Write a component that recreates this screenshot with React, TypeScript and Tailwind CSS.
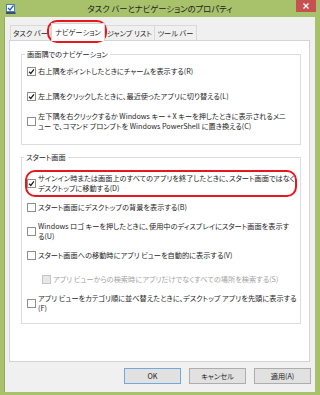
const font = "font-['Noto_Sans_CJK_JP','Noto_Sans',sans-serif] [font-feature-settings:'palt']";

function Box({ checked, disabled }: { checked?: boolean; disabled?: boolean }) {
  return (
    <span
      className={`flex h-[9px] w-[9px] shrink-0 items-center justify-center border ${
        disabled ? "border-[#c4c4c4] bg-[#e8e8e8]" : "border-[#8e8e8e] bg-white"
      }`}
    >
      {checked && (
        <svg viewBox="0 0 8 8" className="h-[7px] w-[7px]">
          <path d="M1.2 4.2 L3.2 6.2 L6.8 1.6" stroke="#1e1e1e" strokeWidth="1.5" fill="none" />
        </svg>
      )}
    </span>
  );
}

function Option({
  lines,
  checked,
  disabled,
  indent,
}: {
  lines: string[];
  checked?: boolean;
  disabled?: boolean;
  indent?: boolean;
}) {
  return (
    <div className={`flex h-[20px] items-center gap-[2px] ${indent ? "pl-[20px]" : "pl-[5px]"}`}>
      <Box checked={checked} disabled={disabled} />
      <div className={`whitespace-nowrap leading-[10px] ${disabled ? "text-[#a3a3a3]" : "text-[#1e1e1e]"}`}>
        {lines.map((l) => (
          <div key={l}>{l}</div>
        ))}
      </div>
    </div>
  );
}

function Tab({ label, active, w }: { label: string; active?: boolean; w: string }) {
  return (
    <div
      className={`flex items-center justify-center whitespace-nowrap border border-b-0 ${w} ${
        active
          ? "relative z-10 -mb-[1px] h-[18px] border-[#d4d4d4] bg-white"
          : "-ml-[1px] h-[15px] border-[#d9d9d9] bg-[#f0f0f0]"
      }`}
    >
      {label}
    </div>
  );
}

function Button({ label, primary }: { label: string; primary?: boolean }) {
  return (
    <div
      className={`flex h-[16px] w-[57px] items-center justify-center border bg-[#e1e1e1] ${
        primary ? "border-[#72a8dd]" : "border-[#adadad]"
      }`}
    >
      {label}
    </div>
  );
}

export default function App() {
  return (
    <div className={`relative flex h-[395px] w-[320px] flex-col bg-[#a8c16b] text-[7.2px] text-[#1e1e1e] ${font}`}>
      {/* title bar */}
      <div className="flex h-[17px] items-center">
        <div className="flex w-[26px] pl-[6px]">
          <svg viewBox="0 0 10 10" className="h-[10px] w-[10px]">
            <rect x="0.5" y="0.5" width="8" height="7" fill="#fff" stroke="#4a7fc1" />
            <path d="M2 4 L4 6 L7.5 1.5" stroke="#2a5fa8" strokeWidth="1.3" fill="none" />
            <rect x="0" y="8" width="9.5" height="2" fill="#3c4f73" />
          </svg>
        </div>
        <div className="flex-1 text-center text-[8.3px] text-[#222]">タスク バーとナビゲーションのプロパティ</div>
        <div className="flex w-[26px] justify-end self-start pr-[4px]">
          <div className="flex h-[12px] w-[20px] items-center justify-center bg-[#c75050]">
            <svg viewBox="0 0 6 6" className="h-[6px] w-[6px]">
              <path d="M0.5 0.5 L5.5 5.5 M5.5 0.5 L0.5 5.5" stroke="#fff" strokeWidth="1.4" />
            </svg>
          </div>
        </div>
      </div>

      {/* window body */}
      <div className="ml-[4px] flex h-[375px] w-[311px] flex-col border-l border-[#93ab5c] bg-[#f0f0f0] pt-[6px]">
        <div className="ml-[5px] flex h-[17px] items-end pl-[1px]">
          <Tab label="タスク バー" w="w-[41px]" />
          <Tab label="ナビゲーション" active w="w-[54px]" />
          <Tab label="ジャンプ リスト" w="w-[51px]" />
          <Tab label="ツール バー" w="w-[43px]" />
        </div>

        <div className="ml-[4px] h-[322px] w-[301px] border border-[#d4d4d4] bg-white pl-[11px] pr-[8px] pt-[8px]">
          <fieldset className="border border-[#dcdcdc] pb-[13px] pt-[2px]">
            <legend className="ml-[3px] px-[2px] leading-[10px]">画面隅でのナビゲーション</legend>
            <div className="flex flex-col gap-[5px]">
              <Option checked lines={["右上隅をポイントしたときにチャームを表示する(R)"]} />
              <Option checked lines={["左上隅をクリックしたときに、最近使ったアプリに切り替える(L)"]} />
              <Option
                lines={[
                  "左下隅を右クリックするか Windows キー + X キーを押したときに表示されるメニ",
                  "ュー で、コマンド プロンプトを Windows PowerShell に置き換える(C)",
                ]}
              />
            </div>
          </fieldset>

          <fieldset className="mt-[7px] border border-[#dcdcdc] pb-[10px] pt-[11px]">
            <legend className="ml-[2px] px-[2px] leading-[10px]">スタート画面</legend>
            <div className="flex flex-col gap-[4px]">
              <Option
                checked
                lines={[
                  "サインイン時または画面上のすべてのアプリを終了したときに、スタート画面ではなく",
                  "デスクトップに移動する(D)",
                ]}
              />
              <Option lines={["スタート画面にデスクトップの背景を表示する(B)"]} />
              <Option
                lines={[
                  "Windows ロゴ キーを押したときに、使用中のディスプレイにスタート画面を表示す",
                  "る(U)",
                ]}
              />
              <Option lines={["スタート画面への移動時にアプリ ビューを自動的に表示する(V)"]} />
              <Option disabled indent lines={["アプリ ビューからの検索時にアプリだけでなくすべての場所を検索する(S)"]} />
              <Option
                lines={[
                  "アプリ ビューをカテゴリ順に並べ替えたときに、デスクトップ アプリを先頭に表示する",
                  "(F)",
                ]}
              />
            </div>
          </fieldset>
        </div>

        <div className="mt-[6px] flex justify-end gap-[8px] pr-[4px]">
          <Button label="OK" primary />
          <Button label="キャンセル" />
          <Button label="適用(A)" />
        </div>
      </div>

      {/* red annotation rings */}
      <div className="absolute left-[47px] top-[20px] h-[23px] w-[60px] rounded-[10px] border-2 border-[#e5191d]" />
      <div className="absolute left-[25px] top-[170px] h-[27px] w-[272px] rounded-[10px] border-2 border-[#e5191d]" />
    </div>
  );
}
